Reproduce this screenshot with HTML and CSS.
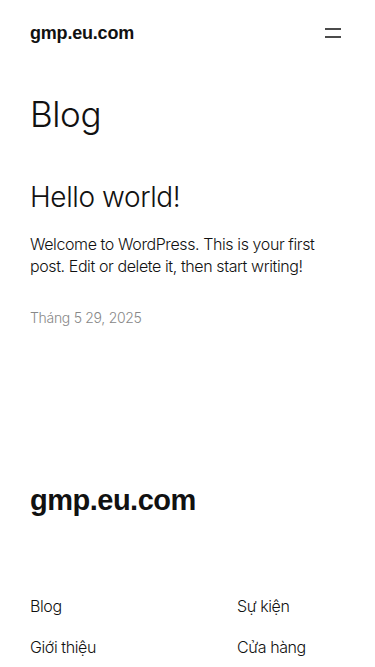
FILE: index.html
```html
<!DOCTYPE html>
<html lang="vi">
<head>
<meta charset="utf-8">
<meta name="viewport" content="width=device-width, initial-scale=1">
<title>Blog – gmp.eu.com</title>
<link rel="stylesheet" href="styles.css">
</head>
<body>
<header class="site-header">
  <a class="site-title" href="#">gmp.eu.com</a>
  <button class="menu-btn" aria-label="Menu">
    <svg width="16" height="10" viewBox="0 0 16 10"><path d="M0 1h16M0 9h16" stroke="#111" stroke-width="1.5" fill="none"/></svg>
  </button>
</header>
<main class="main">
  <h1 class="page-title">Blog</h1>
  <article class="post">
    <h2 class="post-title">Hello world!</h2>
    <p class="post-excerpt">Welcome to WordPress. This is your first post. Edit or delete it, then start writing!</p>
    <time class="post-date">Tháng 5 29, 2025</time>
  </article>
</main>
<footer class="site-footer">
  <a class="footer-title" href="#">gmp.eu.com</a>
  <nav class="footer-nav">
    <a href="#">Blog</a>
    <a href="#">Sự kiện</a>
    <a href="#">Giới thiệu</a>
    <a href="#">Cửa hàng</a>
  </nav>
</footer>
</body>
</html>
```
FILE: styles.css
```css
* { box-sizing: border-box; }
body {
  margin: 0;
  background: #fff;
  color: #111;
  font-family: Inter, "Noto Sans", sans-serif;
  -webkit-font-smoothing: antialiased;
}
a { color: inherit; text-decoration: none; }
.site-header {
  display: flex;
  align-items: center;
  justify-content: space-between;
  padding: 0 34px 0 30px;
  height: 66px;
}
.site-title {
  font-family: "Liberation Sans", Arial, sans-serif;
  font-weight: 700;
  font-size: 18px;
  letter-spacing: -0.2px;
}
.menu-btn {
  background: none;
  border: 0;
  padding: 0;
  width: 16px;
  height: 10px;
  display: flex;
}
.main {
  padding: 27px 30px 0 30px;
}
.page-title {
  margin: 0;
  font-weight: 300;
  font-size: 35px;
  line-height: 42px;
  letter-spacing: -0.4px;
}
.post { margin-top: 45px; }
.post-title {
  margin: 0;
  font-weight: 300;
  font-size: 28px;
  line-height: 34px;
  letter-spacing: -0.4px;
}
.post-excerpt {
  margin: 19px 0 0 0;
  font-size: 16px;
  font-weight: 300;
  line-height: 22px;
  letter-spacing: -0.4px;
}
.post-date {
  display: block;
  margin-top: 32px;
  font-size: 14px;
  line-height: 17px;
  font-weight: 300;
  color: #888;
  letter-spacing: -0.3px;
}
.site-footer {
  padding: 158px 30px 0 30px;
}
.footer-title {
  display: block;
  font-family: "Liberation Sans", Arial, sans-serif;
  font-weight: 700;
  font-size: 29px;
  line-height: 33px;
  letter-spacing: -0.5px;
}
.footer-nav {
  margin-top: 79px;
  display: grid;
  grid-template-columns: 207px 1fr;
  row-gap: 20px;
  font-size: 16px;
  font-weight: 300;
  letter-spacing: -0.4px;
  line-height: 21px;
}
```
